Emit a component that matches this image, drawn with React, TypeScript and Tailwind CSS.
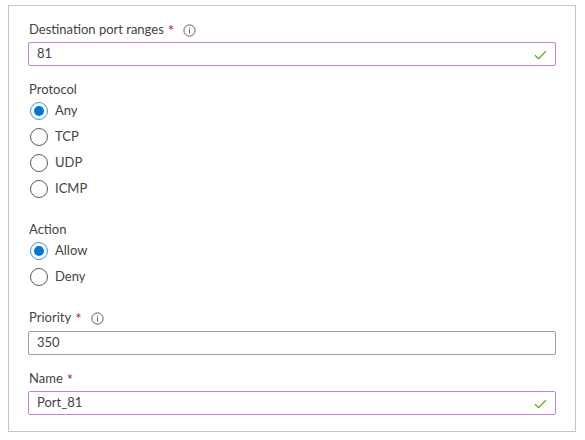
import React from "react";

const font = { fontFamily: "Lato, 'Open Sans', sans-serif" };

const InfoIcon = () => (
  <svg width="13" height="13" viewBox="0 0 13 13" className="ml-[9px]">
    <circle cx="6.5" cy="6.5" r="5.6" fill="none" stroke="#605e5c" strokeWidth="1" />
    <rect x="6" y="5.5" width="1" height="4" fill="#605e5c" />
    <rect x="6" y="3.5" width="1" height="1" fill="#605e5c" />
  </svg>
);

const Check = () => (
  <svg width="13" height="10" viewBox="0 0 13 10" className="absolute right-[8px] top-[7px]">
    <path d="M1 5.2 L4.6 8.6 L12 1.2" fill="none" stroke="#57a300" strokeWidth="1.2" />
  </svg>
);

const Label = ({ text, required, info }: { text: string; required?: boolean; info?: boolean }) => (
  <div className="flex h-[20px] items-center pl-[1px] text-[13px] text-[#444342]">
    <span>{text}</span>
    {required && <span className="ml-[4px] text-[15px] leading-none text-[#a4262c]">*</span>}
    {info && <InfoIcon />}
  </div>
);

const Input = ({ value, valid }: { value: string; valid?: boolean }) => (
  <div
    className={
      "relative flex h-[24px] items-center rounded-[2px] border pl-[8px] text-[13px] text-[#444342] " +
      (valid ? "border-[#c084d4]" : "border-[#a19f9d]")
    }
  >
    {value}
    {valid && <Check />}
  </div>
);

const Radio = ({ label, checked }: { label: string; checked?: boolean }) => (
  <div className="flex h-[22px] items-center pl-[2px] text-[13px] text-[#444342]">
    <span
      className={
        "flex h-[18px] w-[18px] items-center justify-center rounded-full border " +
        (checked ? "border-[#3b97e0]" : "border-[#5c5b5a]")
      }
    >
      {checked && <span className="h-[10px] w-[10px] rounded-full bg-[#0078d4]" />}
    </span>
    <span className="ml-[7px]">{label}</span>
  </div>
);

export default function App() {
  return (
    <div className="h-[440px] w-[585px] bg-white pl-[8px] pt-[5px]" style={font}>
      <div className="h-[427px] w-[568px] border border-[#c8c6c4] px-[19px] pt-[14px]">
        <Label text="Destination port ranges" required info />
        <div className="mt-[2px]">
          <Input value="81" valid />
        </div>

        <div className="mt-[14px]">
          <Label text="Protocol" />
          <div className="flex flex-col gap-[4px]">
            <Radio label="Any" checked />
            <Radio label="TCP" />
            <Radio label="UDP" />
            <Radio label="ICMP" />
          </div>
        </div>

        <div className="mt-[20px]">
          <Label text="Action" />
          <div className="flex flex-col gap-[4px]">
            <Radio label="Allow" checked />
            <Radio label="Deny" />
          </div>
        </div>

        <div className="mt-[20px]">
          <Label text="Priority" required info />
          <div className="mt-[3px]">
            <Input value="350" />
          </div>
        </div>

        <div className="mt-[14px]">
          <Label text="Name" required />
          <div className="mt-[2px]">
            <Input value="Port_81" valid />
          </div>
        </div>
      </div>
    </div>
  );
}
